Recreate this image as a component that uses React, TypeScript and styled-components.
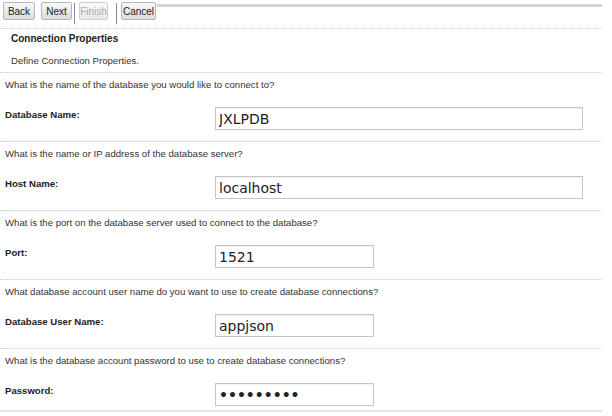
import React from 'react';
import styled, { createGlobalStyle } from 'styled-components';

const GlobalStyle = createGlobalStyle`
	body {
		margin: 0;
		background: #fff;
		font-family: "Liberation Sans", Arial, sans-serif;
		color: #333;
	}
`;

const fields = [
	{ id: 'db', question: 'What is the name of the database you would like to connect to?', label: 'Database Name:', value: 'JXLPDB', wide: true },
	{ id: 'host', question: 'What is the name or IP address of the database server?', label: 'Host Name:', value: 'localhost', wide: true },
	{ id: 'port', question: 'What is the port on the database server used to connect to the database?', label: 'Port:', value: '1521' },
	{ id: 'user', question: 'What database account user name do you want to use to create database connections?', label: 'Database User Name:', value: 'appjson' },
	{ id: 'pass', question: 'What is the database account password to use to create database connections?', label: 'Password:', value: 'appjson12', secret: true },
];

const App: React.FC = () => {
	return (
		<Page>
			<GlobalStyle />
			<Toolbar>
				<Button $w={32}>Back</Button>
				<Button $w={31} $gap={6}>Next</Button>
				<Separator />
				<Button $w={29} $gap={4} disabled>
					Finish
				</Button>
				<Separator $gap={8} />
				<Button $w={35} $gap={4}>Cancel</Button>
				<TopBar />
			</Toolbar>
			<Header>
				<Title>Connection Properties</Title>
				<Description>Define Connection Properties.</Description>
			</Header>
			{fields.map((field, i) => (
				<Section key={field.id}>
					<Question>{field.question}</Question>
					<FieldRow $last={i === fields.length - 1}>
						<Label htmlFor={field.id}>{field.label}</Label>
						<Input
							id={field.id}
							type={field.secret ? 'password' : 'text'}
							defaultValue={field.value}
							$wide={!!field.wide}
							$secret={!!field.secret}
							readOnly
						/>
					</FieldRow>
				</Section>
			))}
			<BottomRule />
		</Page>
	);
};

export default App;

const Page = styled.div`
	width: 602px;
`;

const Toolbar = styled.div`
	display: flex;
	align-items: flex-start;
	height: 29px;
	box-sizing: border-box;
	padding: 2px 0 0 3px;
	border-bottom: 1px dotted #d2d2d2;
`;

const Button = styled.button<{ $w: number; $gap?: number }>`
	width: ${(p) => p.$w}px;
	height: 18px;
	margin-left: ${(p) => p.$gap || 0}px;
	padding: 0;
	box-sizing: border-box;
	border: 1px solid #b9b9b9;
	border-radius: 2px;
	background: linear-gradient(#f8f8f8, #dcdcdc);
	font-family: "Liberation Sans", Arial, sans-serif;
	font-size: 10px;
	color: #222;
	text-align: center;

	&:disabled {
		color: #a8a8a8;
		border-color: #cfcfcf;
		background: linear-gradient(#fafafa, #e8e8e8);
	}
`;

const Separator = styled.span<{ $gap?: number }>`
	width: 1px;
	height: 21px;
	margin: 1px 0 0 ${(p) => p.$gap || 2}px;
	background: #8a8a8a;
`;

const TopBar = styled.div`
	flex: 1;
	height: 3px;
	margin: 2px 0 0 1px;
	background: #d4d4d4;
`;

const Header = styled.div`
	padding: 4px 11px 5px;
	font-size: 9.6px;
	line-height: 12px;
`;

const Title = styled.div`
	font-size: 10px;
	font-weight: bold;
	color: #222;
`;

const Description = styled.div`
	margin-top: 10px;
	color: #333;
`;

const Section = styled.div`
	border-top: 1px dotted #c9c9c9;
`;

const Question = styled.div`
	padding: 6px 5px;
	font-size: 9.6px;
	line-height: 12px;
	color: #333;
`;

const FieldRow = styled.div<{ $last?: boolean }>`
	display: grid;
	grid-template-columns: 210px auto;
	align-items: start;
	padding: 10px 5px ${(p) => (p.$last ? 4 : 11)}px;
`;

const Label = styled.label`
	padding-top: 2px;
	font-size: 9.6px;
	line-height: 12px;
	font-weight: bold;
	color: #222;
`;

const Input = styled.input<{ $wide: boolean; $secret: boolean }>`
	width: ${(p) => (p.$wide ? 368 : 159)}px;
	height: 23px;
	box-sizing: border-box;
	margin: 0;
	padding: 0 3px;
	border: 1px solid #c6c6c6;
	border-radius: 0;
	box-shadow: inset 0 1px 1px rgba(0, 0, 0, 0.06);
	background: #fff;
	font-family: "DejaVu Sans", sans-serif;
	font-size: 14px;
	font-weight: ${(p) => (p.$secret ? 'bold' : 'normal')};
	color: #222;
	outline: none;
`;

const BottomRule = styled.div`
	height: 2px;
	background: #e3e3e3;
`;
